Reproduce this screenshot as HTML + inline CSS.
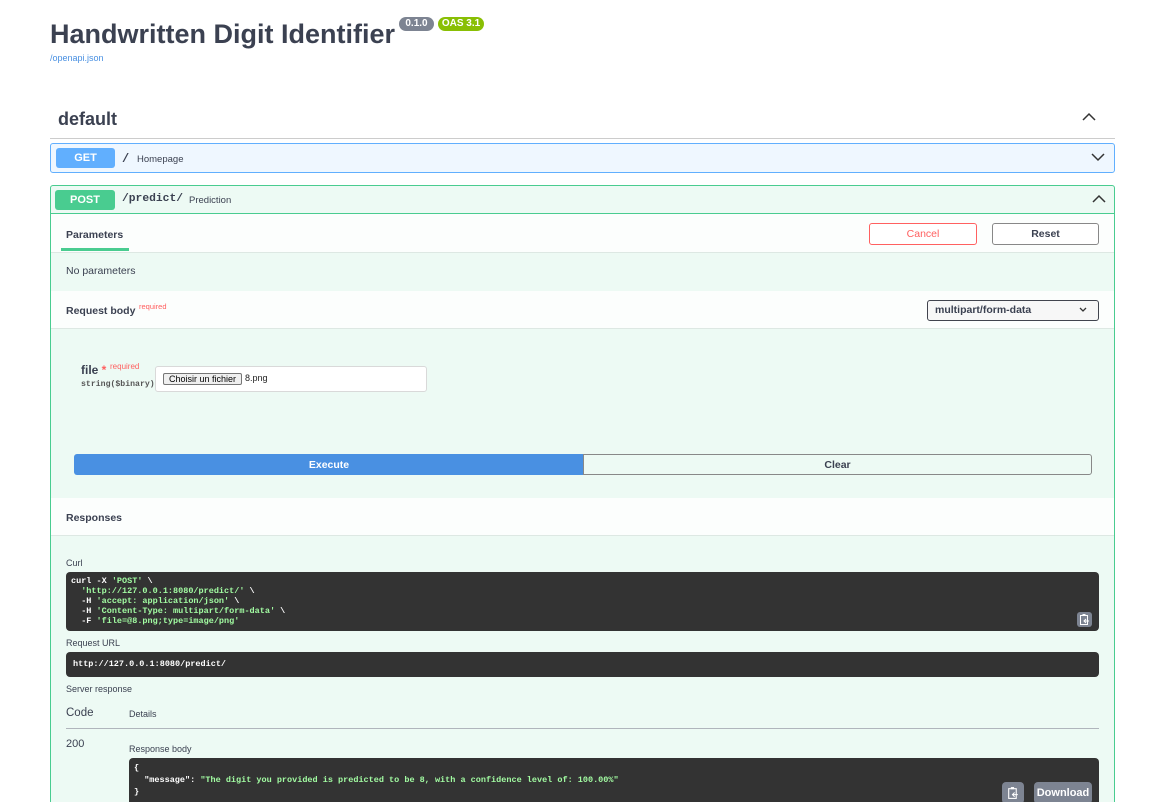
<!DOCTYPE html>
<html><head><meta charset="utf-8"><style>
*{box-sizing:border-box;margin:0;padding:0}
html{width:1176px;height:802px;overflow:hidden}
body{width:1176px;height:802px;overflow:hidden;background:#fff;font-family:"Liberation Sans",sans-serif;color:#3b4151;position:relative}
.a{position:absolute;white-space:nowrap}
.mono{font-family:"Liberation Mono",monospace}
.b{font-weight:bold}
.code{background:#333;border-radius:4px;color:#fff;font-family:"Liberation Mono",monospace;font-weight:bold;font-size:8.5px}
.g{color:#a2fca2}
</style></head><body>
<div class="a b" style="left:50px;top:16px;font-size:27px;line-height:36px">Handwritten Digit Identifier</div>
<div class="a b" style="left:399px;top:17px;width:35px;height:14px;background:#7d8492;border-radius:7px;color:#fff;font-size:10px;line-height:14px;text-align:center">0.1.0</div>
<div class="a b" style="left:438px;top:17px;width:46px;height:14px;background:#89bf04;border-radius:7px;color:#fff;font-size:10px;line-height:14px;text-align:center">OAS 3.1</div>
<div class="a" style="left:50px;top:53px;font-size:9px;color:#4990e2">/openapi.json</div>
<div class="a b" style="left:58px;top:108px;font-size:18px;line-height:22px">default</div>
<svg class="a" style="left:1082px;top:112px" width="14" height="10" viewBox="0 0 14 10"><path d="M1 8L7 2L13 8" fill="none" stroke="#333" stroke-width="1.5"/></svg>
<div class="a" style="left:50px;top:138px;width:1065px;height:1px;background:#ccc"></div>

<div class="a" style="left:50px;top:143px;width:1065px;height:30px;background:#eff7ff;border:1px solid #61affe;border-radius:3px"></div>
<div class="a b" style="left:56px;top:148px;width:59px;height:20px;background:#61affe;border-radius:3px;color:#fff;font-size:11px;line-height:21px;text-align:center">GET</div>
<div class="a mono b" style="left:122px;top:152px;font-size:12px">/</div>
<div class="a" style="left:137px;top:154px;font-size:9.5px">Homepage</div>
<svg class="a" style="left:1091px;top:152px" width="14" height="10" viewBox="0 0 14 10"><path d="M1 2L7 8L13 2" fill="none" stroke="#333" stroke-width="1.5"/></svg>

<div class="a" style="left:50px;top:185px;width:1065px;height:630px;background:#edfaf4;border:1px solid #49cc90;border-radius:3px"></div>
<div class="a b" style="left:55px;top:190px;width:60px;height:20px;background:#49cc90;border-radius:3px;color:#fff;font-size:11px;line-height:21px;text-align:center">POST</div>
<div class="a mono b" style="left:122px;top:193px;font-size:11.3px">/predict/</div>
<div class="a" style="left:189px;top:195px;font-size:9.5px">Prediction</div>
<svg class="a" style="left:1092px;top:194px" width="14" height="10" viewBox="0 0 14 10"><path d="M1 8L7 2L13 8" fill="none" stroke="#333" stroke-width="1.5"/></svg>
<div class="a" style="left:51px;top:213px;width:1063px;height:1px;background:#49cc90"></div>

<div class="a" style="left:51px;top:214px;width:1063px;height:39px;background:#fcfefd;border-bottom:1px solid #dde8e3"></div>
<div class="a b" style="left:66px;top:229px;font-size:10.5px">Parameters</div>
<div class="a" style="left:61px;top:248px;width:68px;height:3px;background:#49cc90"></div>
<div class="a" style="left:869px;top:223px;width:108px;height:22px;border:1.5px solid #ff6060;border-radius:3px;color:#ff6060;font-size:10.5px;line-height:20px;text-align:center;background:#fff">Cancel</div>
<div class="a b" style="left:992px;top:223px;width:107px;height:22px;border:1.5px solid #888;border-radius:3px;font-size:10.5px;line-height:20px;text-align:center;background:#fff">Reset</div>
<div class="a" style="left:66px;top:265px;font-size:10.5px">No parameters</div>

<div class="a" style="left:51px;top:291px;width:1063px;height:38px;background:#fcfefd;border-bottom:1px solid #dde8e3"></div>
<div class="a b" style="left:66px;top:305px;font-size:10.5px">Request body</div>
<div class="a" style="left:139px;top:302px;font-size:7.5px;color:#ff6060">required</div>
<div class="a b" style="left:927px;top:300px;width:172px;height:21px;border:1.5px solid #41444e;border-radius:3px;background:#f7f7f7;font-size:10.5px;line-height:19px;padding-left:7px">multipart/form-data</div>
<svg class="a" style="left:1079px;top:307px" width="8" height="6" viewBox="0 0 8 6"><path d="M1 1L4 4L7 1" fill="none" stroke="#333" stroke-width="1.3"/></svg>

<div class="a b" style="left:81px;top:363px;font-size:12px">file <span style="color:#ff6060">*</span></div>
<div class="a" style="left:110px;top:362px;font-size:8px;color:#ff6060">required</div>
<div class="a mono b" style="left:81px;top:380px;font-size:8.2px;color:#555">string($binary)</div>
<div class="a" style="left:155px;top:366px;width:272px;height:26px;background:#fff;border:1px solid #d9d9d9;border-radius:3px"></div>
<div class="a" style="left:163px;top:373px;width:79px;height:12px;background:#efefef;border:1px solid #767676;border-radius:2px;font-size:9px;line-height:10px;text-align:center;color:#000">Choisir un fichier</div>
<div class="a" style="left:245px;top:373px;font-size:9px;color:#222">8.png</div>

<div class="a b" style="left:74px;top:454px;width:510px;height:21px;background:#4990e2;border-radius:3px 0 0 3px;color:#fff;font-size:10.5px;line-height:22px;text-align:center">Execute</div>
<div class="a b" style="left:583px;top:454px;width:509px;height:21px;border:1px solid #888;border-radius:0 3px 3px 0;font-size:10.5px;line-height:20px;text-align:center">Clear</div>

<div class="a" style="left:51px;top:498px;width:1063px;height:38px;background:#fcfefd;border-bottom:1px solid #dde8e3"></div>
<div class="a b" style="left:66px;top:512px;font-size:10.5px">Responses</div>

<div class="a" style="left:66px;top:558px;font-size:9px">Curl</div>
<div class="a code" style="left:66px;top:572px;width:1033px;height:59px;padding:4px 5px;line-height:10px;white-space:pre">curl -X <span class="g">'POST'</span> \
  <span class="g">'http://127.0.0.1:8080/predict/'</span> \
  -H <span class="g">'accept: application/json'</span> \
  -H <span class="g">'Content-Type: multipart/form-data'</span> \
  -F <span class="g">'file=@8.png;type=image/png'</span></div>
<div class="a" style="left:1077px;top:612px;width:15px;height:15px;background:#7d8492;border-radius:3px"></div>
<svg class="a" style="left:1079px;top:613px" width="11" height="13" viewBox="0 0 11 13"><rect x="1.5" y="2.5" width="7" height="9" fill="none" stroke="#fff" stroke-width="1"/><rect x="3.5" y="1" width="3" height="2" fill="#fff"/><path d="M5 8H10M7 6L5 8L7 10" fill="none" stroke="#fff" stroke-width="1"/></svg>
<div class="a" style="left:66px;top:638px;font-size:9px">Request URL</div>
<div class="a code" style="left:66px;top:652px;width:1033px;height:25px;padding:7px 7px;line-height:11px">http://127.0.0.1:8080/predict/</div>
<div class="a" style="left:66px;top:684px;font-size:9px">Server response</div>
<div class="a" style="left:66px;top:707px;font-size:11.5px">Code</div>
<div class="a" style="left:129px;top:709px;font-size:9px">Details</div>
<div class="a" style="left:66px;top:728px;width:1033px;height:1px;background:#b0b5bc"></div>
<div class="a" style="left:66px;top:738px;font-size:11px">200</div>
<div class="a" style="left:129px;top:744px;font-size:9px">Response body</div>
<div class="a code" style="left:129px;top:758px;width:970px;height:60px;padding:4px 5px;line-height:12px;white-space:pre">{
  "message": <span class="g">"The digit you provided is predicted to be 8, with a confidence level of: 100.00%"</span>
}</div>
<div class="a" style="left:1002px;top:782px;width:22px;height:22px;background:#7d8492;border-radius:4px"></div>
<svg class="a" style="left:1007px;top:786px" width="12" height="14" viewBox="0 0 11 13"><rect x="1.5" y="2.5" width="7" height="9" fill="none" stroke="#fff" stroke-width="1"/><rect x="3.5" y="1" width="3" height="2" fill="#fff"/><path d="M5 8H10M7 6L5 8L7 10" fill="none" stroke="#fff" stroke-width="1"/></svg>
<div class="a b" style="left:1034px;top:782px;width:58px;height:22px;background:#7d8492;border-radius:4px;color:#fff;font-size:11px;line-height:23px;text-align:center">Download</div>
</body></html>
